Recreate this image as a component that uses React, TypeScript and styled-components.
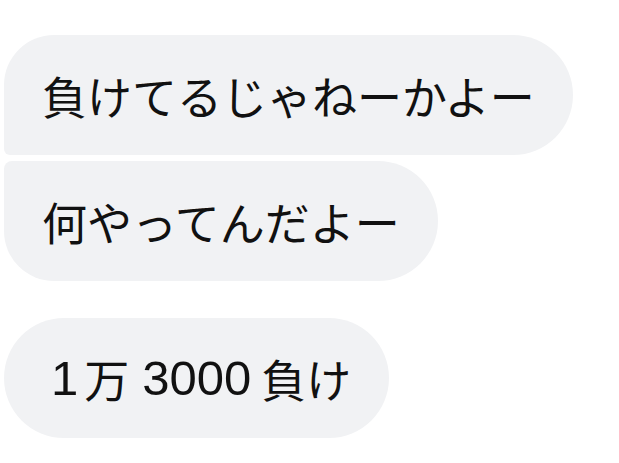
import React from "react";
import styled, { createGlobalStyle } from "styled-components";

const GlobalStyle = createGlobalStyle`
  html, body {
    margin: 0;
    padding: 0;
    background: #ffffff;
  }
  body {
    font-family: "Noto Sans CJK JP", "Noto Sans", sans-serif;
  }
`;

type Corner = "first" | "last" | "single";

const radius: Record<Corner, string> = {
  first: "50px 60px 60px 6px",
  last: "8px 60px 60px 50px",
  single: "60px",
};

const Thread = styled.div`
  display: flex;
  flex-direction: column;
  align-items: flex-start;
  padding: 35px 0 0 4px;
`;

const Group = styled.div`
  display: flex;
  flex-direction: column;
  align-items: flex-start;
  gap: 6px;
  margin-bottom: 37px;
`;

const Bubble = styled.div<{ $corner: Corner }>`
  display: inline-flex;
  align-items: center;
  box-sizing: border-box;
  height: 120px;
  padding: 0 38px 0 38px;
  background: #f1f2f4;
  border-radius: ${(p) => radius[p.$corner]};
  color: #111111;
  font-size: 45px;
  line-height: 1;
  white-space: nowrap;
`;

// half-width digits get extra room around them, like the phone's auto-spacing
const Num = styled.span<{ $before: number; $after: number }>`
  font-family: "Liberation Sans", "Noto Sans", sans-serif;
  font-size: 49px;
  margin-left: ${(p) => p.$before}px;
  margin-right: ${(p) => p.$after}px;
`;

export default function App() {
  return (
    <>
      <GlobalStyle />
      <Thread>
        <Group>
          <Bubble $corner="first">負けてるじゃねーかよー</Bubble>
          <Bubble $corner="last">何やってんだよー</Bubble>
        </Group>
        <Bubble $corner="single">
          <Num $before={9} $after={6}>1</Num>万<Num $before={13} $after={10}>3000</Num>負け
        </Bubble>
      </Thread>
    </>
  );
}
